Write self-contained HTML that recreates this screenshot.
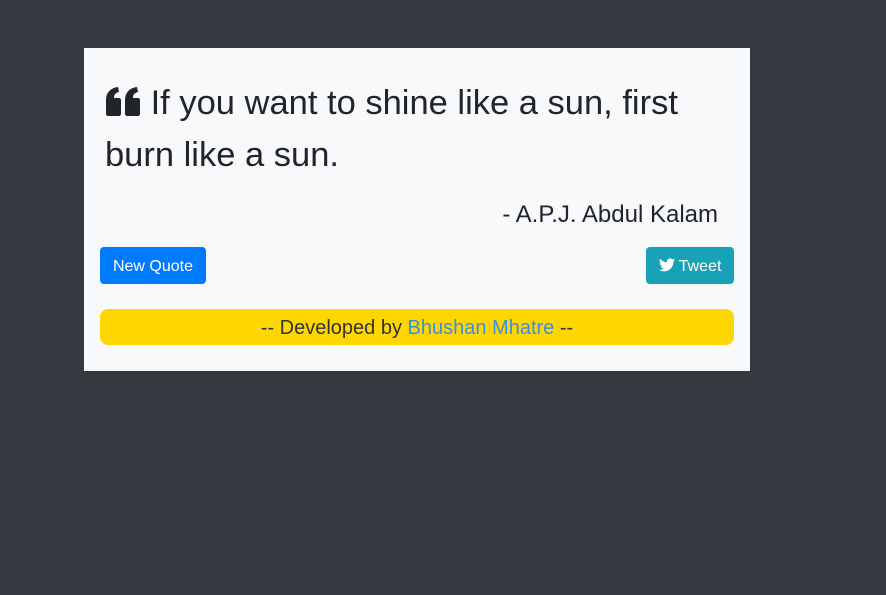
<!DOCTYPE html>
<html><head><style>
html,body{margin:0;padding:0;width:886px;height:595px;background:#343a40;overflow:hidden;font-family:"Liberation Sans","DejaVu Sans",sans-serif;color:#212529}
.card{position:absolute;left:84px;top:48px;width:666px;height:323px;background:#f8f9fa}
.q{position:absolute;left:21px;top:29px;width:610px;font-size:34.5px;line-height:52px;margin:0}
.a{position:absolute;right:32px;top:153px;font-size:24px}
.btn{position:absolute;top:199px;height:37px;border-radius:4px;color:#fff;font-size:16px;line-height:40px;text-align:center}
.nq{left:16px;width:106px;background:#007bff}
.tw{left:562px;width:88px;background:#17a2b8}
.f{position:absolute;left:16px;top:261px;width:634px;height:36px;background:#ffd700;border-radius:8px;text-align:center;font-size:20px;line-height:38px;color:#333}
.f span{color:#3a8fe0}
</style></head><body>
<div class="card">
<p class="q"><svg width="36" height="30" viewBox="0 0 36 30" style="vertical-align:-3px"><path fill="#212529" d="M1 13C1 6 5 1 13 0l1 5c-4 1-5 3-5 6h5c1 0 2 1 2 2v14c0 1-1 2-2 2H3c-1 0-2-1-2-2zM20 13c0-7 4-12 12-13l1 5c-4 1-5 3-5 6h5c1 0 2 1 2 2v14c0 1-1 2-2 2H22c-1 0-2-1-2-2z"/></svg> If you want to shine like a sun, first burn like a sun.</p>
<div class="a">- A.P.J. Abdul Kalam</div>
<div class="btn nq">New Quote</div>
<div class="btn tw"><svg width="16" height="14" viewBox="0 0 24 20" style="vertical-align:-1px"><path fill="#fff" d="M24 2.4c-.9.4-1.8.7-2.8.8 1-.6 1.8-1.6 2.2-2.700-1 .6-2 1-3.1 1.2A4.9 4.9 0 0 0 11.9 6 14 14 0 0 1 1.7.9a4.9 4.9 0 0 0 1.5 6.6c-.8 0-1.6-.3-2.2-.6 0 2.4 1.7 4.4 3.9 4.8-.7.2-1.5.2-2.2.1.6 2 2.4 3.4 4.6 3.4A9.9 9.9 0 0 1 0 17.3 14 14 0 0 0 7.5 19.5c9.1 0 14-7.5 14-14v-.6c1-.7 1.8-1.6 2.5-2.5z"/></svg> Tweet</div>
<div class="f">-- Developed by <span>Bhushan Mhatre</span> --</div>
</div>
</body></html>
